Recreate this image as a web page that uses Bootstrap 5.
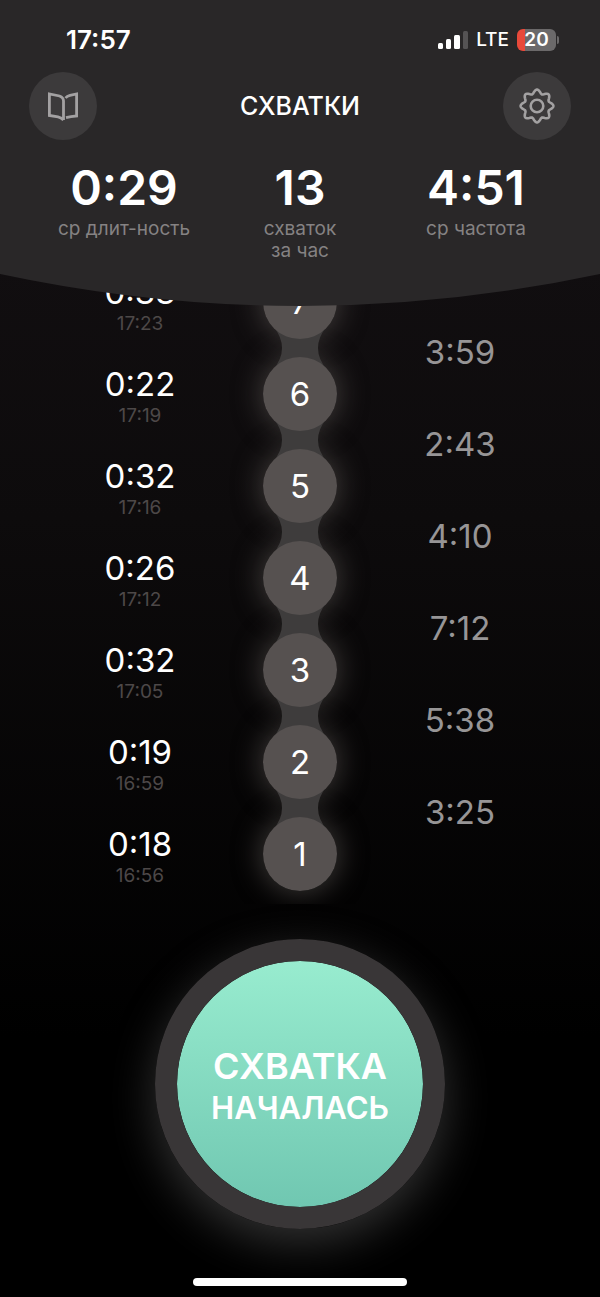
<!DOCTYPE html>
<html lang="ru">
<head>
<meta charset="utf-8">
<meta name="viewport" content="width=device-width, initial-scale=1">
<title>Схватки</title>
<link href="https://cdn.jsdelivr.net/npm/bootstrap@5.3.0/dist/css/bootstrap.min.css" rel="stylesheet">
<style>
  body { font-family: Inter, "Liberation Sans", sans-serif; color: #fff; background: linear-gradient(#110e10 20%, #0d0b0c 40%, #000 80%) #000; }
  .app-head { z-index: 3; }
  .head-fill { background: #292728; }
  .status-bar { height: 72px; padding: 8px 41px 0 66px; font-size: 26px; line-height: 32px; font-weight: 600; }
  .lte { font-size: 19px; font-weight: 500; }
  .battery-box { width: 39px; height: 22px; border-radius: 6px; font-size: 19px; line-height: 22px; background: linear-gradient(90deg, #e8493a 8px, #6b696a 8px); }
  .battery-tip { width: 2px; height: 8px; margin-left: 1px; border-radius: 0 4px 4px 0; background: #6b696a; }
  .top-nav { padding: 0 29px; }
  .round-btn { width: 68px; height: 68px; background: #3c3a3b; color: #a3a1a2; }
  .page-title { font-size: 25px; line-height: 32px; font-weight: 500; }
  .stats { padding: 20px 36px 12px; }
  .stat-value { font-size: 48px; line-height: 56px; font-weight: 600; margin-bottom: 2px; }
  .stat-label { font-size: 19px; line-height: 22px; color: #858283; }
  .curve { height: 32px; }
  .log { padding: 0 60px 4px; margin-top: -50px; }
  .log li { height: 92px; }
  .log .dur { padding-top: 18px; }
  .dur-value, .gap-value, .disc { font-size: 33px; line-height: 36px; }
  .dur-time { font-size: 19px; line-height: 28px; color: #4d4848; }
  .gap-list { margin-bottom: 42px; }
  .gap-value { color: #979596; }
  .disc { width: 74px; height: 74px; background: #565150; z-index: 2; }
  .glow::before { content: ""; position: absolute; width: 74px; height: 74px; border-radius: 50%; box-shadow: 0 0 28px 2px rgba(96, 91, 89, .6); }
  .neck { top: -23px; z-index: 1; }
  .action-area { padding-top: 35px; }
  .start-btn { width: 290px; height: 290px; border: 22px solid #393637; background: linear-gradient(#98eccf, #70c7b1) padding-box; box-shadow: 0 14px 46px rgba(120, 118, 118, .42); color: #fff; font-weight: 600; }
  .start-big { font-size: 36px; line-height: 44px; padding-top: 4px; }
  .start-small { font-size: 31px; line-height: 40px; }
  .home-bar { width: 214px; height: 8px; margin: 49px 0 11px; }
</style>
</head>
<body class="min-vh-100 d-flex flex-column">
<header class="app-head position-relative">
  <div class="head-fill">
    <div class="status-bar d-flex align-items-center justify-content-between">
      <span>17:57</span>
      <div class="d-flex align-items-center">
        <svg class="me-2" width="30" height="20" viewBox="0 0 30 20" fill="#fff" aria-hidden="true">
          <rect x="0" y="13" width="5" height="6" rx="1.5"/><rect x="8" y="9" width="5" height="10" rx="1.5"/><rect x="16" y="5" width="6" height="14" rx="1.5"/><rect x="25" y="1" width="5" height="18" rx="1.5" fill="#555354"/>
        </svg>
        <span class="lte me-2">LTE</span>
        <span class="battery-box text-center">20</span><span class="battery-tip"></span>
      </div>
    </div>
    <nav class="top-nav d-flex align-items-center justify-content-between">
      <button type="button" class="round-btn btn rounded-circle border-0 p-0 d-flex align-items-center justify-content-center" aria-label="Журнал">
        <svg width="34" height="34" viewBox="0 0 34 34" fill="none" stroke="currentColor" stroke-width="2.8" aria-hidden="true">
          <path d="M17.500 31V12Q17.500 8.500 13.500 7L3.400 5V26.500L12 27.800Q15 28.400 17.500 31"/>
          <path d="M19.500 9Q21 7 24 6.300L30.600 5V27L25 27.600Q22.500 28 20 28.600"/>
        </svg>
      </button>
      <h1 class="page-title m-0">СХВАТКИ</h1>
      <button type="button" class="round-btn btn rounded-circle border-0 p-0 d-flex align-items-center justify-content-center" aria-label="Настройки">
        <svg width="36" height="36" viewBox="-18 -18 36 36" fill="none" stroke="currentColor" stroke-width="2.6" stroke-linejoin="round" aria-hidden="true">
          <circle r="6.300"/>
          <path id="gear" d=""/>
        </svg>
      </button>
    </nav>
    <div class="stats">
      <div class="row g-0 text-center">
        <div class="col-4"><div class="stat-value">0:29</div><div class="stat-label">ср длит-ность</div></div>
        <div class="col-4"><div class="stat-value">13</div><div class="stat-label">схваток<br>за час</div></div>
        <div class="col-4"><div class="stat-value">4:51</div><div class="stat-label">ср частота</div></div>
      </div>
    </div>
  </div>
  <svg class="curve d-block w-100" viewBox="0 0 600 32" preserveAspectRatio="none" aria-hidden="true"><path d="M0 0H600Q300 64 0 0Z" fill="#292728"/></svg>
</header>

<main class="d-flex flex-column flex-grow-1">
  <section class="log overflow-hidden">
    <div class="row g-0 text-center align-items-end">
      <ol class="col-4 list-unstyled m-0">
        <li class="dur"><div class="dur-value">0:33</div><div class="dur-time">17:23</div></li>
        <li class="dur"><div class="dur-value">0:22</div><div class="dur-time">17:19</div></li>
        <li class="dur"><div class="dur-value">0:32</div><div class="dur-time">17:16</div></li>
        <li class="dur"><div class="dur-value">0:26</div><div class="dur-time">17:12</div></li>
        <li class="dur"><div class="dur-value">0:32</div><div class="dur-time">17:05</div></li>
        <li class="dur"><div class="dur-value">0:19</div><div class="dur-time">16:59</div></li>
        <li class="dur"><div class="dur-value">0:18</div><div class="dur-time">16:56</div></li>
      </ol>
      <ol class="col-4 list-unstyled m-0" id="chain"></ol>
      <ol class="gap-list col-4 list-unstyled" id="gaps"></ol>
    </div>
  </section>

  <section class="action-area text-center">
    <button type="button" class="start-btn btn rounded-circle p-0">
      <span class="start-big d-block">СХВАТКА</span>
      <span class="start-small d-block">НАЧАЛАСЬ</span>
    </button>
  </section>
</main>
<footer class="d-flex justify-content-center"><div class="home-bar bg-white rounded-pill"></div></footer>

<script>
  // Numbered discs joined by necks, newest first
  document.getElementById('chain').innerHTML = [7, 6, 5, 4, 3, 2, 1].map((n, i) => `
    <li class="glow position-relative d-flex align-items-center justify-content-center">
      ${i ? `<svg class="neck position-absolute" width="60" height="46" viewBox="0 0 60 46" fill="#3e3c3c" aria-hidden="true"><path d="M3 1Q12 12 12 23Q12 34 3 45H57Q48 34 48 23Q48 12 57 1Z"/></svg>` : ''}
      <span class="disc position-relative rounded-circle d-flex align-items-center justify-content-center">${n}</span>
    </li>`).join('');
  document.getElementById('gaps').innerHTML = ['3:59', '2:43', '4:10', '7:12', '5:38', '3:25'].map(t =>
    `<li class="gap-value d-flex align-items-center justify-content-center">${t}</li>`).join('');
  // Gear outline: eight soft teeth
  let d = '';
  for (let a = 0; a < 360; a += 3) {
    const t = a * Math.PI / 180, r = 14.500 + 1.900 * Math.cos(8 * t);
    d += (a ? 'L' : 'M') + (r * Math.sin(t)).toFixed(2) + ' ' + (-r * Math.cos(t)).toFixed(2);
  }
  document.getElementById('gear').setAttribute('d', d + 'Z');
</script>
<script src="https://cdn.jsdelivr.net/npm/bootstrap@5.3.0/dist/js/bootstrap.bundle.min.js"></script>
</body>
</html>
